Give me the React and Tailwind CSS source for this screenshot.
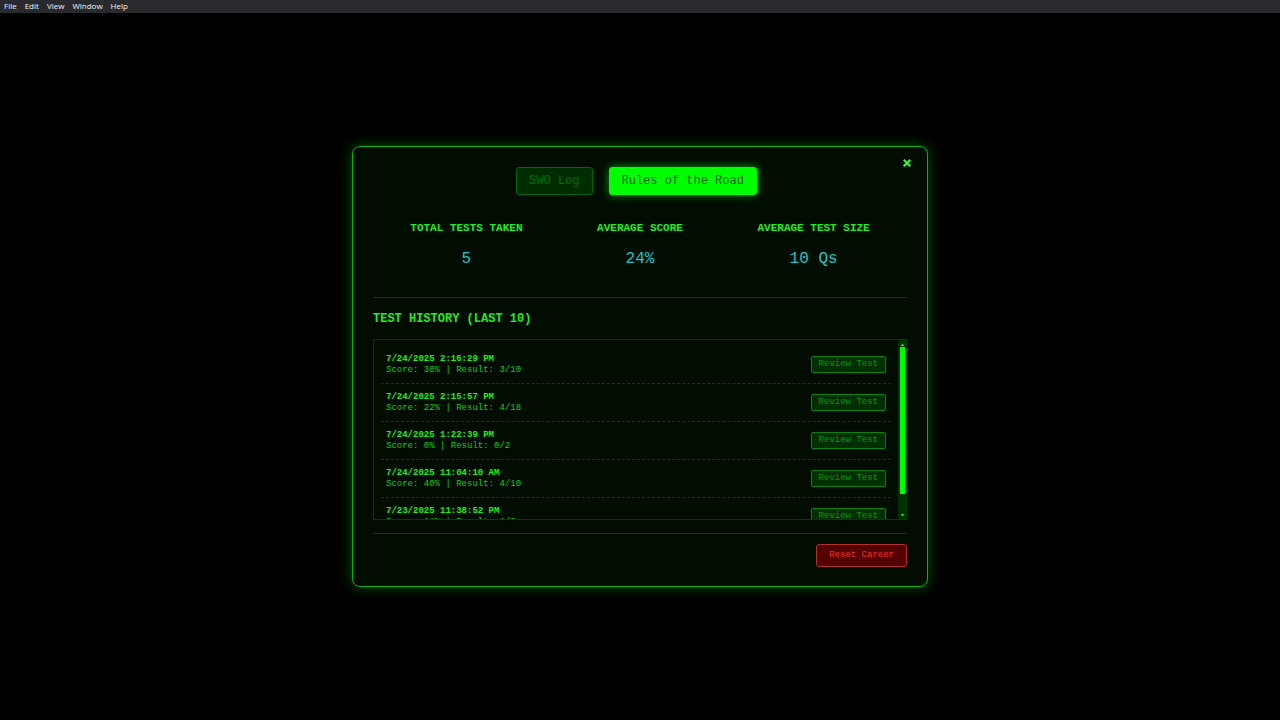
import React, { useState } from 'react';

const MENU_ITEMS = ['File', 'Edit', 'View', 'Window', 'Help'];

const STATS = [
  { label: 'Total Tests Taken', value: '5' },
  { label: 'Average Score', value: '24%' },
  { label: 'Average Test Size', value: '10 Qs' }
];

const HISTORY = [
  { date: '7/24/2025 2:16:29 PM', score: '30%', result: '3/10' },
  { date: '7/24/2025 2:15:57 PM', score: '22%', result: '4/18' },
  { date: '7/24/2025 1:22:39 PM', score: '0%', result: '0/2' },
  { date: '7/24/2025 11:04:10 AM', score: '40%', result: '4/10' },
  { date: '7/23/2025 11:38:52 PM', score: '11%', result: '1/9' }
];

const MenuBar = () => (
  <nav className="flex h-[13px] items-center gap-2 bg-[#292a2d] px-1 pb-px font-['Open_Sans',sans-serif] text-[8px] leading-none text-[#f4f4f4]">
    {MENU_ITEMS.map((item) => (
      <button key={item} type="button">
        {item}
      </button>
    ))}
  </nav>
);

const Tab = ({ active, onClick, children }) => (
  <button
    type="button"
    onClick={onClick}
    className={
      active
        ? 'h-7 rounded-[3px] border border-[#00ff00] bg-[#00ff00] px-3 text-xs leading-4 text-[#006400] shadow-[0_0_8px_#00ff0099]'
        : 'h-7 rounded-[3px] border border-[#006400] bg-[#002d00] px-3 text-xs leading-4 text-[#007000]'
    }
  >
    {children}
  </button>
);

const HistoryRow = ({ date, score, result }) => (
  <li className="flex h-[38px] shrink-0 items-center justify-between border-b border-dashed border-[#0b3f0b] px-[5px]">
    <div className="text-[9px] leading-[11px] text-[#1fc71f]">
      <p className="font-bold text-[#22ee22]">{date}</p>
      <p>
        Score: {score} | Result: {result}
      </p>
    </div>
    <button
      type="button"
      className="h-[17px] rounded-[2px] border border-[#0d800d] bg-[#003000] px-[7px] text-[9px] leading-none text-[#0a980a]"
    >
      Review Test
    </button>
  </li>
);

const ScrollTrack = () => (
  <div className="flex w-2 shrink-0 flex-col items-end bg-[#003000] pr-px" aria-hidden="true">
    <svg className="h-[7px] w-[5px] shrink-0" viewBox="0 0 5 7" fill="#33dd33">
      <path d="M0.5 6 L2.5 3.5 L4.5 6 Z" />
    </svg>
    <div className="h-[147px] w-[5px] bg-[#00ff00]" />
    <svg className="mt-auto h-[7px] w-[5px] shrink-0" viewBox="0 0 5 7" fill="#22dd22">
      <path d="M0.5 2 L4.5 2 L2.5 4.5 Z" />
    </svg>
  </div>
);

const App = () => {
  const [tab, setTab] = useState('rules');

  return (
    <div className="flex min-h-screen flex-col bg-black">
      <MenuBar />

      <main className="flex flex-1 items-center justify-center font-['Liberation_Mono',monospace]">
        <section className="relative w-full max-w-xl rounded-lg border border-[#10b010] bg-[#000d00] px-5 pt-5 pb-[19px] shadow-[0_0_14px_#00ff0055]">
          <button
            type="button"
            aria-label="Close"
            className="absolute top-2 right-[14px] flex h-4 w-3 items-center justify-center"
          >
            <svg className="h-2 w-2" viewBox="0 0 8 8" stroke="#33ff33" strokeWidth="2" fill="none">
              <path d="M0.7 0.7 L7.3 7.3 M7.3 0.7 L0.7 7.3" />
            </svg>
          </button>

          <div className="flex justify-center gap-4 pr-[7px]">
            <Tab active={tab === 'swo'} onClick={() => setTab('swo')}>
              SWO Log
            </Tab>
            <Tab active={tab === 'rules'} onClick={() => setTab('rules')}>
              Rules of the Road
            </Tab>
          </div>

          <dl className="flex justify-around border-b border-[#063f06] pt-[25px] pb-7 text-center">
            {STATS.map(({ label, value }) => (
              <div key={label}>
                <dt className="text-[11px] leading-4 font-bold text-[#22ee22] uppercase">{label}</dt>
                <dd className="mt-[13px] text-base leading-5 text-[#22c4c8]">{value}</dd>
              </div>
            ))}
          </dl>

          {/* Test history */}
          <h2 className="mt-[13px] text-xs leading-4 font-bold text-[#22ee22] uppercase">Test History (Last 10)</h2>
          <div className="mt-3 flex h-[181px] border border-[#043d04]">
            <ul className="flex min-w-0 flex-1 flex-col overflow-y-auto px-[7px] pt-[6px] [scrollbar-width:none]">
              {HISTORY.map((item) => (
                <HistoryRow key={item.date} {...item} />
              ))}
            </ul>
            <ScrollTrack />
          </div>

          <div className="mt-[13px] flex justify-end border-t border-[#063f06] pt-[10px]">
            <button
              type="button"
              className="h-[23px] rounded-[3px] border border-[#b03030] bg-[#550000] px-3 text-[9px] leading-none text-[#f03636]"
            >
              Reset Career
            </button>
          </div>
        </section>
      </main>
    </div>
  );
};

export default App;
